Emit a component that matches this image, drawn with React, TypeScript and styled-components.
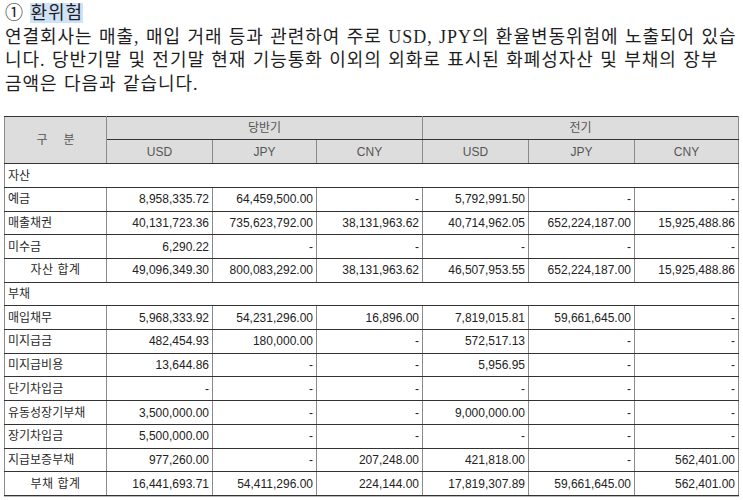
import React from "react";
import styled, { createGlobalStyle } from "styled-components";

const Global = createGlobalStyle`
  html, body { margin: 0; padding: 0; background: #ffffff; }
  body { width: 743px; height: 500px; overflow: hidden; }
`;

const Page = styled.div`
  padding: 2px 0 0 4px;
  display: flex;
  flex-direction: column;
`;

const Text = styled.div`
  font-family: "Liberation Serif", "Noto Sans CJK KR", serif;
  font-size: 18px;
  line-height: 23.5px;
  color: #1e1e1e;
  letter-spacing: 0.95px;
  word-spacing: 1px;
  padding-left: 1px;
`;

const Line = styled.div`
  white-space: nowrap;
`;

const Highlight = styled.span`
  background: #cfe2f8;
`;

const Wrap = styled.div`
  margin-top: 20px;
  width: 734px;
  border-right: 1px solid #b8b8b8;
  border-bottom: 1px solid #b8b8b8;
`;

const Table = styled.table`
  width: 734px;
  table-layout: fixed;
  border-collapse: collapse;
  font-family: "Liberation Sans", "Noto Sans CJK KR", sans-serif;
  font-size: 12px;
  color: #222;
  border-top: 1px solid #444;
  border-left: 1px solid #444;
  border-right: 1px solid #8a8a8a;
`;

const Row = styled.tr<{ $h?: number }>`
  height: ${(p) => p.$h ?? 23.7}px;
`;

const Cell = styled.td`
  border-top: 1px solid #333;
  border-bottom: 1px solid #333;
  border-left: 1px solid #8a8a8a;
  border-right: 1px solid #8a8a8a;
  padding: 0 3px;
  white-space: nowrap;
  overflow: hidden;
  line-height: 14px;
`;

const Head = styled(Cell)`
  background: #dddddd;
  color: #555;
  text-align: center;
`;

const Label = styled(Cell)<{ $total?: boolean }>`
  text-align: ${(p) => (p.$total ? "center" : "left")};
  color: #2a2a2a;
  letter-spacing: ${(p) => (p.$total ? "0.5px" : "0")};
`;

const Num = styled(Cell)`
  text-align: right;
`;

const Section = styled(Cell)`
  text-align: left;
  color: #2a2a2a;
`;

const Gap = styled.span`
  display: inline-block;
  width: 16px;
`;

type R = { label: string; vals: string[]; total?: boolean };

const assets: R[] = [
  { label: "예금", vals: ["8,958,335.72", "64,459,500.00", "-", "5,792,991.50", "-", "-"] },
  { label: "매출채권", vals: ["40,131,723.36", "735,623,792.00", "38,131,963.62", "40,714,962.05", "652,224,187.00", "15,925,488.86"] },
  { label: "미수금", vals: ["6,290.22", "-", "-", "-", "-", "-"] },
  { label: "자산 합계", total: true, vals: ["49,096,349.30", "800,083,292.00", "38,131,963.62", "46,507,953.55", "652,224,187.00", "15,925,488.86"] },
];

const liabilities: R[] = [
  { label: "매입채무", vals: ["5,968,333.92", "54,231,296.00", "16,896.00", "7,819,015.81", "59,661,645.00", "-"] },
  { label: "미지급금", vals: ["482,454.93", "180,000.00", "-", "572,517.13", "-", "-"] },
  { label: "미지급비용", vals: ["13,644.86", "-", "-", "5,956.95", "-", "-"] },
  { label: "단기차입금", vals: ["-", "-", "-", "-", "-", "-"] },
  { label: "유동성장기부채", vals: ["3,500,000.00", "-", "-", "9,000,000.00", "-", "-"] },
  { label: "장기차입금", vals: ["5,500,000.00", "-", "-", "-", "-", "-"] },
  { label: "지급보증부채", vals: ["977,260.00", "-", "207,248.00", "421,818.00", "-", "562,401.00"] },
  { label: "부채 합계", total: true, vals: ["16,441,693.71", "54,411,296.00", "224,144.00", "17,819,307.89", "59,661,645.00", "562,401.00"] },
];

const widths = [102, 106, 104, 106, 106, 106, 104];

const DataRow = ({ r }: { r: R }) => (
  <Row>
    <Label $total={r.total}>{r.label}</Label>
    {r.vals.map((v, i) => (
      <Num key={i}>{v}</Num>
    ))}
  </Row>
);

export default function App() {
  return (
    <>
      <Global />
      <Page>
        <Text>
          <Line>
            ① <Highlight>환위험</Highlight>
          </Line>
          <Line>연결회사는 매출, 매입 거래 등과 관련하여 주로 USD, JPY의 환율변동위험에 노출되어 있습</Line>
          <Line>니다. 당반기말 및 전기말 현재 기능통화 이외의 외화로 표시된 화폐성자산 및 부채의 장부</Line>
          <Line>금액은 다음과 같습니다.</Line>
        </Text>
        <Wrap>
          <Table>
            <colgroup>
              {widths.map((w, i) => (
                <col key={i} style={{ width: w }} />
              ))}
            </colgroup>
            <tbody>
              <Row $h={23.3}>
                <Head rowSpan={2}>
                  구<Gap />분
                </Head>
                <Head colSpan={3}>당반기</Head>
                <Head colSpan={3}>전기</Head>
              </Row>
              <Row $h={24}>
                <Head>USD</Head>
                <Head>JPY</Head>
                <Head>CNY</Head>
                <Head>USD</Head>
                <Head>JPY</Head>
                <Head>CNY</Head>
              </Row>
              <Row>
                <Section colSpan={7}>자산</Section>
              </Row>
              {assets.map((r) => (
                <DataRow key={r.label} r={r} />
              ))}
              <Row>
                <Section colSpan={7}>부채</Section>
              </Row>
              {liabilities.map((r) => (
                <DataRow key={r.label} r={r} />
              ))}
            </tbody>
          </Table>
        </Wrap>
      </Page>
    </>
  );
}
